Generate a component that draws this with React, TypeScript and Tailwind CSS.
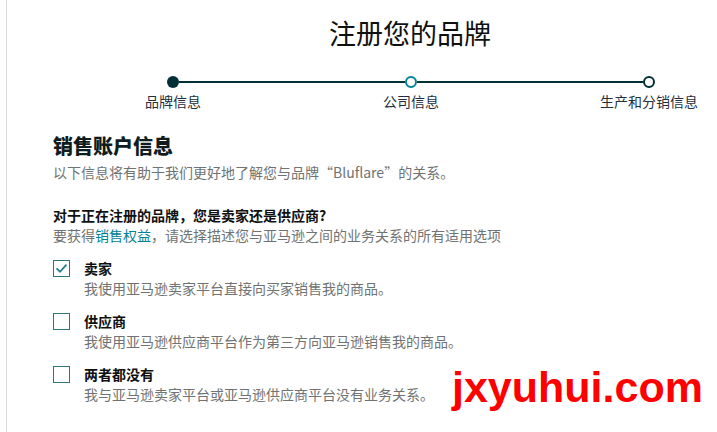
const cjk = { fontFamily: '"Noto Sans CJK SC", "Noto Sans", sans-serif' };

const steps = [
  { label: '品牌信息', state: 'done' },
  { label: '公司信息', state: 'current' },
  { label: '生产和分销信息', state: 'todo' },
];

const options = [
  { title: '卖家', desc: '我使用亚马逊卖家平台直接向买家销售我的商品。', checked: true },
  { title: '供应商', desc: '我使用亚马逊供应商平台作为第三方向亚马逊销售我的商品。', checked: false },
  { title: '两者都没有', desc: '我与亚马逊卖家平台或亚马逊供应商平台没有业务关系。', checked: false },
];

function Dot({ state }: { state: string }) {
  if (state === 'done') return <div className="h-3 w-3 rounded-full bg-[#002f36]" />;
  if (state === 'current')
    return <div className="h-3 w-3 rounded-full border-2 border-[#008296] bg-white" />;
  return <div className="h-3 w-3 rounded-full border-2 border-[#002f36] bg-white" />;
}

function Stepper() {
  return (
    <div className="ml-[160px] flex w-[488px] items-start">
      {steps.map((s, i) => (
        <div key={s.label} className="contents">
          <div className="flex w-3 flex-col items-center">
            <Dot state={s.state} />
            <span className="mt-1 whitespace-nowrap text-[14px] leading-[18px] text-[#232f3e]">
              {s.label}
            </span>
          </div>
          {i < steps.length - 1 && <div className="mt-[5px] h-[2px] flex-1 bg-[#002f36]" />}
        </div>
      ))}
    </div>
  );
}

function Checkbox({ checked }: { checked: boolean }) {
  return (
    <div className="mt-[2px] flex h-[17px] w-[17px] shrink-0 items-center justify-center border border-[#2e7480] bg-white">
      {checked && (
        <svg viewBox="0 0 16 16" className="h-[13px] w-[13px]">
          <path d="M2.5 8.5 L6.3 12 L13.5 3.8" fill="none" stroke="#1d7f8f" strokeWidth="2.2" strokeLinecap="round" strokeLinejoin="round" />
        </svg>
      )}
    </div>
  );
}

export default function App() {
  return (
    <div className="relative h-[432px] w-[717px] overflow-hidden bg-white" style={cjk}>
      <div className="ml-[6px] h-full border-l border-[#d5d9d9] pt-4">
        <h1 className="pl-[322px] text-[27px] font-normal leading-[34px] text-[#0f1111]">注册您的品牌</h1>
        <div className="mt-[26px]">
          <Stepper />
        </div>
        <div className="pl-[46px]">
          <h2 className="mt-[22px] text-[20px] font-black leading-[28px] text-[#0f1c20]">销售账户信息</h2>
          <p className="mt-[2px] text-[14px] leading-5 text-[#6f7373]">
            以下信息将有助于我们更好地了解您与品牌“Bluflare”的关系。
          </p>
          <p className="mt-[23px] text-[14px] font-bold leading-5 text-[#0f1111]">
            对于正在注册的品牌，您是卖家还是供应商?
          </p>
          <p className="text-[14px] leading-5 text-[#6f7373]">
            要获得<span className="text-[#008296]">销售权益</span>，请选择描述您与亚马逊之间的业务关系的所有适用选项
          </p>
          <div className="mt-[13px] flex flex-col gap-[13px]">
            {options.map((o) => (
              <div key={o.title} className="flex gap-[14px]">
                <Checkbox checked={o.checked} />
                <div>
                  <div className="text-[14px] font-bold leading-5 text-[#0f1111]">{o.title}</div>
                  <div className="text-[14px] leading-5 text-[#6f7373]">{o.desc}</div>
                </div>
              </div>
            ))}
          </div>
        </div>
      </div>
      <div
        className="absolute left-[452px] top-[366px] text-[43px] font-bold leading-none text-[#ff0000]"
        style={{ fontFamily: '"Liberation Sans", Arial, sans-serif' }}
      >
        jxyuhui.com
      </div>
    </div>
  );
}
